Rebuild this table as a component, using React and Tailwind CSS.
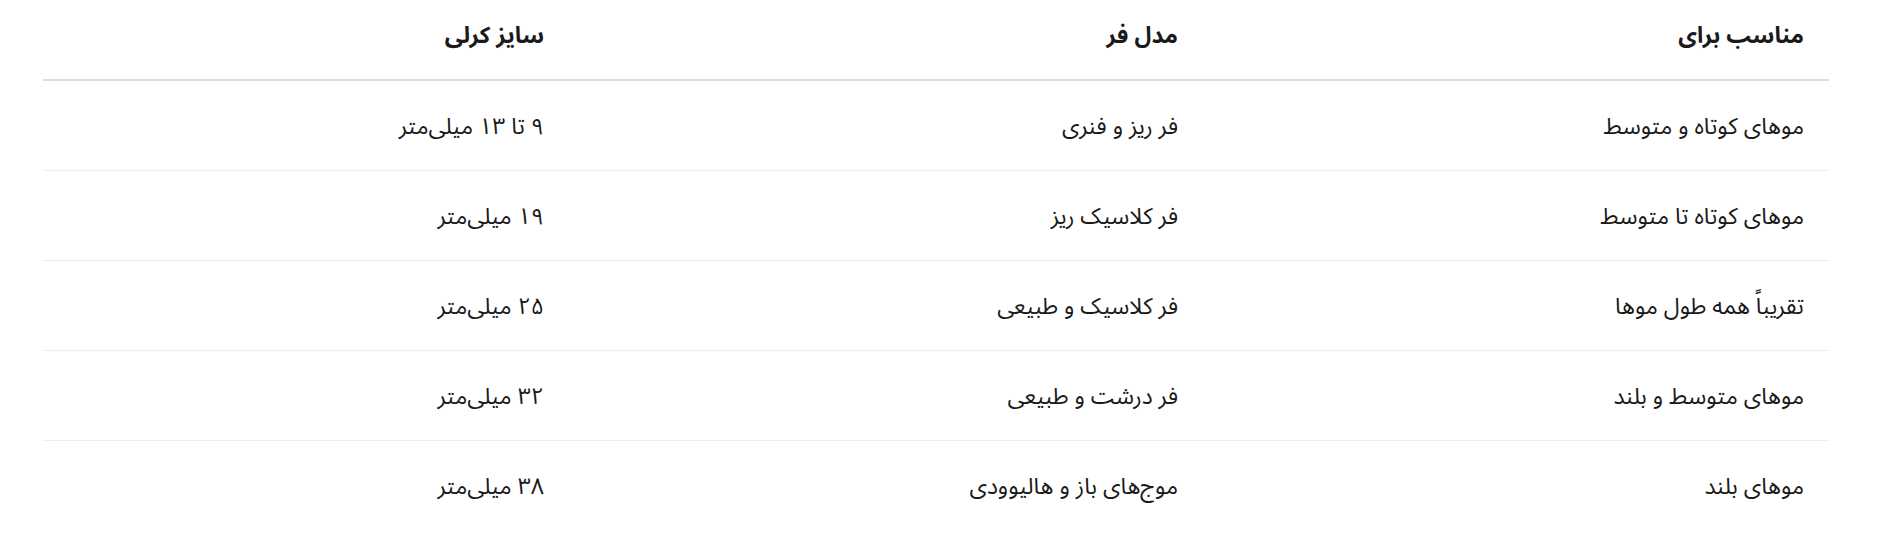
import React from "react";

const rows = [
  { fit: "موهای کوتاه و متوسط", model: "فر ریز و فنری", size: "۹ تا ۱۳ میلی‌متر" },
  { fit: "موهای کوتاه تا متوسط", model: "فر کلاسیک ریز", size: "۱۹ میلی‌متر" },
  { fit: "تقریباً همه طول موها", model: "فر کلاسیک و طبیعی", size: "۲۵ میلی‌متر" },
  { fit: "موهای متوسط و بلند", model: "فر درشت و طبیعی", size: "۳۲ میلی‌متر" },
  { fit: "موهای بلند", model: "موج‌های باز و هالیوودی", size: "۳۸ میلی‌متر" },
];

function App() {
  return (
    <div dir="rtl" className="bg-white w-[1886px] h-[536px] font-['Noto_Sans_Arabic','Noto_Sans','DejaVu_Sans',sans-serif] text-[#1a1a1a]">
      <table className="w-[1786px] mr-[57px] border-collapse text-[23px]">
        <thead>
          <tr className="border-b-2 border-[#dddddd] h-[80px]">
            <th className="w-[627px] text-right font-bold px-[25px] pb-[6px]">مناسب برای</th>
            <th className="w-[634px] text-right font-bold px-[24px] pb-[6px]">مدل فر</th>
            <th className="text-right font-bold px-[24px] pb-[6px]">سایز کرلی</th>
          </tr>
        </thead>
        <tbody>
          {rows.map((r, i) => (
            <tr key={i} className={"h-[90px] " + (i < rows.length - 1 ? "border-b border-[#eeeeee]" : "")}>
              <td className="text-right px-[25px] pt-[4px]">{r.fit}</td>
              <td className="text-right px-[24px] pt-[4px]">{r.model}</td>
              <td className="text-right px-[24px] pt-[4px]">{r.size}</td>
            </tr>
          ))}
        </tbody>
      </table>
    </div>
  );
}

export default App;
